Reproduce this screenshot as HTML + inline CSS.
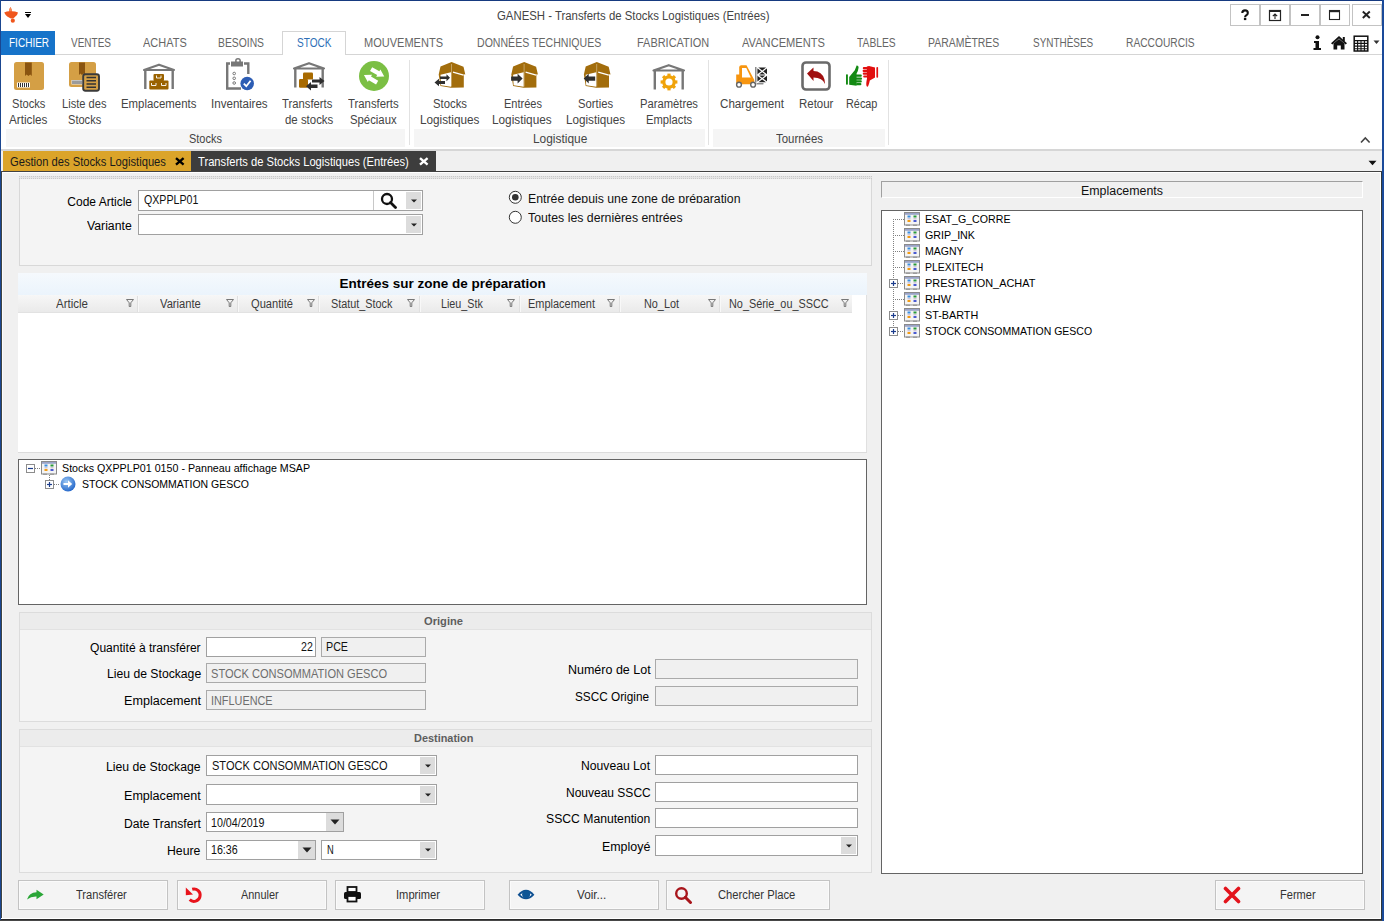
<!DOCTYPE html>
<html><head><meta charset="utf-8"><title>GANESH - Transferts de Stocks Logistiques (Entrées)</title>
<style>
html,body{margin:0;padding:0}
body{width:1384px;height:921px;overflow:hidden;position:relative;background:#f0f0f0;font-family:"Liberation Sans",sans-serif}
.t{position:absolute;white-space:nowrap;transform-origin:0 0}
.r{position:absolute;box-sizing:border-box}
</style></head><body>
<div class="r" style="left:0px;top:0px;width:1384px;height:31px;background:#ffffff;"></div>
<svg class="r" style="left:3px;top:6px" width="17" height="17" viewBox="0 0 17 17"><path d="M7.4 0.9 Q8.7 2.6 9 5.2 Q12.2 5.2 15 6.4 Q14.6 8.6 12.6 10.2 L10.6 12.2 Q9 12.8 7.4 12.2 L4.2 10.6 Q2.1 8.6 1.2 6.6 Q4 5.2 6 5.2 Q6.3 2.6 7.4 0.9 Z" fill="#f0561c"/><path d="M7.4 0.9 Q8.7 2.6 9 5.2 L6 5.2 Q6.3 2.6 7.4 0.9 Z" fill="#f58a5a"/><circle cx="9.8" cy="14.7" r="2.1" fill="#f0561c"/></svg>
<div class="r" style="left:25px;top:12px;width:6px;height:1px;background:#000;"></div>
<svg class="r" style="left:24px;top:14px" width="8" height="5" viewBox="0 0 8 5"><path d="M1 0 L7 0 L4 4 Z" fill="#000"/></svg>
<div class="t" style="left:497.30px;top:9.82px;font-size:12.50px;line-height:12.50px;color:#444;transform:scaleX(0.9100);">GANESH - Transferts de Stocks Logistiques (Entrées)</div>
<div class="r" style="left:1230px;top:4px;width:30px;height:22px;box-sizing:border-box;border:1px solid #c3c3c3;"></div>
<div class="r" style="left:1260px;top:4px;width:30px;height:22px;box-sizing:border-box;border:1px solid #c3c3c3;"></div>
<div class="r" style="left:1290px;top:4px;width:30px;height:22px;box-sizing:border-box;border:1px solid #c3c3c3;"></div>
<div class="r" style="left:1320px;top:4px;width:30px;height:22px;box-sizing:border-box;border:1px solid #c3c3c3;"></div>
<div class="r" style="left:1352px;top:4px;width:30px;height:22px;box-sizing:border-box;border:1px solid #c3c3c3;"></div>
<svg class="r" style="left:1240px;top:9px" width="10" height="12" viewBox="0 0 10 12"><path d="M2.3 4.1 Q2.3 1.4 5 1.4 Q7.8 1.4 7.8 3.9 Q7.8 5.5 6.1 6.4 Q5.1 7 5.1 8.3" stroke="#111" stroke-width="2.1" fill="none"/><rect x="3.9" y="8.9" width="2.4" height="2.2" fill="#111"/></svg>
<svg class="r" style="left:1268px;top:9px" width="14" height="13" viewBox="0 0 14 13"><rect x="1.5" y="1.5" width="11" height="10" fill="none" stroke="#222" stroke-width="1.2"/><rect x="1" y="1" width="12" height="2" fill="#222"/><path d="M7 10 V5 M4.8 7.2 L7 5 L9.2 7.2" stroke="#222" stroke-width="1.1" fill="none"/></svg>
<div class="r" style="left:1301px;top:14px;width:8px;height:2px;background:#222;"></div>
<svg class="r" style="left:1328px;top:9px" width="14" height="13" viewBox="0 0 14 13"><rect x="1.5" y="1.5" width="10" height="9" fill="none" stroke="#222" stroke-width="1.1"/><rect x="1" y="1" width="11" height="2.2" fill="#222"/></svg>
<svg class="r" style="left:1361px;top:10px" width="11" height="10" viewBox="0 0 11 10"><path d="M1.8 1.5 L8.8 8 M8.8 1.5 L1.8 8" stroke="#222" stroke-width="1.9"/></svg>
<div class="r" style="left:0px;top:31px;width:1384px;height:24px;background:#ffffff;"></div>
<div class="r" style="left:0px;top:54px;width:1384px;height:1px;background:#d5d5d5;"></div>
<div class="r" style="left:1px;top:31px;width:54px;height:24px;background:#1673c9;"></div>
<div class="t" style="left:8.80px;top:37.02px;font-size:12.50px;line-height:12.50px;color:#ffffff;transform:scaleX(0.8020);">FICHIER</div>
<div class="r" style="left:282px;top:31px;width:64px;height:24px;background:#ffffff;box-sizing:border-box;border:1px solid #d5d5d5;border-bottom:none;"></div>
<div class="t" style="left:71.30px;top:37.02px;font-size:12.50px;line-height:12.50px;color:#666666;transform:scaleX(0.8000);">VENTES</div>
<div class="t" style="left:143.30px;top:37.02px;font-size:12.50px;line-height:12.50px;color:#666666;transform:scaleX(0.8784);">ACHATS</div>
<div class="t" style="left:218.00px;top:37.02px;font-size:12.50px;line-height:12.50px;color:#666666;transform:scaleX(0.8279);">BESOINS</div>
<div class="t" style="left:296.50px;top:37.02px;font-size:12.50px;line-height:12.50px;color:#2e6fb7;transform:scaleX(0.8058);">STOCK</div>
<div class="t" style="left:364.00px;top:37.02px;font-size:12.50px;line-height:12.50px;color:#666666;transform:scaleX(0.8821);">MOUVEMENTS</div>
<div class="t" style="left:477.40px;top:37.02px;font-size:12.50px;line-height:12.50px;color:#666666;transform:scaleX(0.8456);">DONNÉES TECHNIQUES</div>
<div class="t" style="left:637.30px;top:37.02px;font-size:12.50px;line-height:12.50px;color:#666666;transform:scaleX(0.8758);">FABRICATION</div>
<div class="t" style="left:742.00px;top:37.02px;font-size:12.50px;line-height:12.50px;color:#666666;transform:scaleX(0.8895);">AVANCEMENTS</div>
<div class="t" style="left:857.40px;top:37.02px;font-size:12.50px;line-height:12.50px;color:#666666;transform:scaleX(0.8234);">TABLES</div>
<div class="t" style="left:927.70px;top:37.02px;font-size:12.50px;line-height:12.50px;color:#666666;transform:scaleX(0.8370);">PARAMÈTRES</div>
<div class="t" style="left:1032.50px;top:37.02px;font-size:12.50px;line-height:12.50px;color:#666666;transform:scaleX(0.7954);">SYNTHÈSES</div>
<div class="t" style="left:1125.60px;top:37.02px;font-size:12.50px;line-height:12.50px;color:#666666;transform:scaleX(0.8172);">RACCOURCIS</div>
<svg class="r" style="left:1312px;top:35px" width="10" height="16" viewBox="0 0 10 16"><circle cx="5.5" cy="2.3" r="2" fill="#111"/><path d="M2 6 H7 V13 H9 V15 H1.5 V13 H3.5 V8 H2 Z" fill="#111"/></svg>
<svg class="r" style="left:1330px;top:35px" width="18" height="15" viewBox="0 0 18 15"><path d="M9 1 L17 8.2 L15.6 9.4 L9 3.6 L2.4 9.4 L1 8.2 Z" fill="#111"/><path d="M3.5 8.5 L9 4 L14.5 8.5 V14.5 H10.8 V10.5 H7.2 V14.5 H3.5 Z" fill="#111"/><rect x="12.8" y="2" width="2" height="4" fill="#111"/></svg>
<svg class="r" style="left:1353px;top:35px" width="16" height="17" viewBox="0 0 16 17"><rect x="1.2" y="1.2" width="13.6" height="14.8" fill="none" stroke="#111" stroke-width="1.5"/><path d="M1 5.6 H15 M1 8.4 H15 M1 11.1 H15 M1 13.8 H15 M4.6 5.6 V16 M8 5.6 V16 M11.4 5.6 V16" stroke="#111" stroke-width="1.1"/></svg>
<svg class="r" style="left:1373px;top:40px" width="7" height="5" viewBox="0 0 7 5"><path d="M0.5 0.5 H6.5 L3.5 4 Z" fill="#333"/></svg>
<div class="r" style="left:0px;top:55px;width:1384px;height:95px;background:#ffffff;"></div>
<div class="r" style="left:0px;top:149px;width:1384px;height:2px;background:#d6d6d6;"></div>
<div class="r" style="left:6px;top:129px;width:399px;height:18px;background:#f5f5f5;"></div>
<div class="r" style="left:414px;top:129px;width:291px;height:18px;background:#f5f5f5;"></div>
<div class="r" style="left:713px;top:129px;width:172px;height:18px;background:#f5f5f5;"></div>
<div class="r" style="left:409px;top:60px;width:1px;height:85px;background:#e2e2e2;"></div>
<div class="r" style="left:708px;top:60px;width:1px;height:85px;background:#e2e2e2;"></div>
<div class="r" style="left:888px;top:60px;width:1px;height:85px;background:#e2e2e2;"></div>
<div class="t" style="left:188.60px;top:132.62px;font-size:12.50px;line-height:12.50px;color:#444;transform:scaleX(0.8773);">Stocks</div>
<div class="t" style="left:532.70px;top:132.62px;font-size:12.50px;line-height:12.50px;color:#444;transform:scaleX(0.9526);">Logistique</div>
<div class="t" style="left:775.80px;top:132.62px;font-size:12.50px;line-height:12.50px;color:#444;transform:scaleX(0.9137);">Tournées</div>
<div class="t" style="left:12.40px;top:97.54px;font-size:12.00px;line-height:12.00px;color:#444;transform:scaleX(0.9278);">Stocks</div>
<div class="t" style="left:9.40px;top:113.54px;font-size:12.00px;line-height:12.00px;color:#444;transform:scaleX(0.9756);">Articles</div>
<div class="t" style="left:61.50px;top:97.54px;font-size:12.00px;line-height:12.00px;color:#444;transform:scaleX(0.9259);">Liste des</div>
<div class="t" style="left:67.80px;top:113.54px;font-size:12.00px;line-height:12.00px;color:#444;transform:scaleX(0.9222);">Stocks</div>
<div class="t" style="left:121.40px;top:97.54px;font-size:12.00px;line-height:12.00px;color:#444;transform:scaleX(0.9499);">Emplacements</div>
<div class="t" style="left:211.40px;top:97.54px;font-size:12.00px;line-height:12.00px;color:#444;transform:scaleX(0.9646);">Inventaires</div>
<div class="t" style="left:282.40px;top:97.54px;font-size:12.00px;line-height:12.00px;color:#444;transform:scaleX(0.9388);">Transferts</div>
<div class="t" style="left:284.70px;top:113.54px;font-size:12.00px;line-height:12.00px;color:#444;transform:scaleX(0.9527);">de stocks</div>
<div class="t" style="left:348.00px;top:97.54px;font-size:12.00px;line-height:12.00px;color:#444;transform:scaleX(0.9462);">Transferts</div>
<div class="t" style="left:350.40px;top:113.54px;font-size:12.00px;line-height:12.00px;color:#444;transform:scaleX(0.9437);">Spéciaux</div>
<div class="t" style="left:433.00px;top:97.54px;font-size:12.00px;line-height:12.00px;color:#444;transform:scaleX(0.9444);">Stocks</div>
<div class="t" style="left:419.60px;top:113.54px;font-size:12.00px;line-height:12.00px;color:#444;transform:scaleX(0.9783);">Logistiques</div>
<div class="t" style="left:504.00px;top:97.54px;font-size:12.00px;line-height:12.00px;color:#444;transform:scaleX(0.9192);">Entrées</div>
<div class="t" style="left:492.00px;top:113.54px;font-size:12.00px;line-height:12.00px;color:#444;transform:scaleX(0.9832);">Logistiques</div>
<div class="t" style="left:578.00px;top:97.54px;font-size:12.00px;line-height:12.00px;color:#444;transform:scaleX(0.9378);">Sorties</div>
<div class="t" style="left:565.80px;top:113.54px;font-size:12.00px;line-height:12.00px;color:#444;transform:scaleX(0.9750);">Logistiques</div>
<div class="t" style="left:640.00px;top:97.54px;font-size:12.00px;line-height:12.00px;color:#444;transform:scaleX(0.9349);">Paramètres</div>
<div class="t" style="left:645.80px;top:113.54px;font-size:12.00px;line-height:12.00px;color:#444;transform:scaleX(0.9367);">Emplacts</div>
<div class="t" style="left:720.00px;top:97.54px;font-size:12.00px;line-height:12.00px;color:#444;transform:scaleX(0.9688);">Chargement</div>
<div class="t" style="left:798.60px;top:97.54px;font-size:12.00px;line-height:12.00px;color:#444;transform:scaleX(0.9556);">Retour</div>
<div class="t" style="left:846.30px;top:97.54px;font-size:12.00px;line-height:12.00px;color:#444;transform:scaleX(0.9054);">Récap</div>
<svg class="r" style="left:1360px;top:136px" width="11" height="8" viewBox="0 0 11 8"><path d="M1 6.5 L5.3 2 L9.6 6.5" fill="none" stroke="#444" stroke-width="1.6"/></svg>
<svg class="r" style="left:0;top:0" width="1384" height="150" viewBox="0 0 1384 150"><rect x="14" y="62" width="30" height="28" rx="2.5" fill="#d49f45"/><path d="M25 62.5 H31.8 V76 L30.2 74.5 L28.4 76 L26.6 74.5 L25 76 Z" fill="#8a5410"/><rect x="17" y="82.5" width="13" height="5" fill="#fff"/><path d="M18.5 83 V87 M20.5 83 V87 M22.5 83 V87 M24.5 83 V87 M26.5 83 V87 M28.5 83 V87" stroke="#333" stroke-width="1"/><rect x="69" y="62" width="27" height="25" rx="2.5" fill="#d49f45"/><path d="M79 62.5 H85 V75 L83.5 73.5 L82 75 L80.5 73.5 L79 75 Z" fill="#8a5410"/><rect x="71.5" y="80" width="12" height="4.5" fill="#eee"/><path d="M73 80.5 V84 M75 80.5 V84 M77 80.5 V84 M79 80.5 V84 M81 80.5 V84" stroke="#333" stroke-width="0.9"/><rect x="83.2" y="74.2" width="15.8" height="16.6" rx="2.2" fill="#d49f45" stroke="#3a3a3a" stroke-width="1.9"/><path d="M86.5 77.5 H96 M86.5 80.8 H96 M86.5 84 H96 M86.5 87.2 H96" stroke="#333" stroke-width="1.5"/><path d="M144 70 L159 64.7 L174 70 L144 70 Z" fill="none" stroke="#777" stroke-width="2.2" stroke-linejoin="round"/><path d="M145.3 70 V89 M172.7 70 V89" stroke="#777" stroke-width="2.4"/><rect x="153.5" y="74" width="10.5" height="7" rx="1" fill="#9a6200"/><rect x="149.3" y="80.6" width="19.2" height="8.8" rx="1" fill="#9a6200"/><path d="M156.5 75.5 V78 H161 V75.5 M151.5 83 V85.5 H156 V83 M161.5 83 V85.5 H166 V83" stroke="#fff" stroke-width="0.9" fill="none"/><path d="M230 63.5 H227.2 V88.5 H241" fill="none" stroke="#777" stroke-width="2.4"/><path d="M244 63.5 H248.3 V74" fill="none" stroke="#777" stroke-width="2.4"/><rect x="231" y="61.5" width="12" height="5" fill="#777"/><circle cx="238" cy="61" r="2.2" fill="none" stroke="#777" stroke-width="1.5"/><circle cx="234.2" cy="73.5" r="1.3" fill="none" stroke="#777" stroke-width="1"/><circle cx="234.2" cy="78.3" r="1.3" fill="none" stroke="#777" stroke-width="1"/><circle cx="234.2" cy="83" r="1.3" fill="none" stroke="#777" stroke-width="1"/><circle cx="247.2" cy="83.5" r="6.8" fill="#2d5db4"/><path d="M243.8 83.6 L246.3 86.2 L250.6 80.8" stroke="#fff" stroke-width="1.8" fill="none"/><path d="M294 68.5 L309 63.2 L324 68.5 L294 68.5 Z" fill="none" stroke="#777" stroke-width="2.2" stroke-linejoin="round"/><path d="M295.3 68.5 V87.5 M322.7 68.5 V87.5" stroke="#777" stroke-width="2.4"/><rect x="303" y="72.5" width="10" height="7" rx="1.2" fill="#a86a00"/><rect x="299" y="79" width="9" height="8.8" rx="1.2" fill="#a86a00"/><path d="M312 79.5 H319.5 V77 L324.5 81 L319.5 85 V82.5 H312 Z" fill="#2f2f2f"/><path d="M317.5 84.5 H311 V82 L306 86.2 L311 90.5 V88 H317.5 Z" fill="#2f2f2f"/><circle cx="374" cy="76" r="15" fill="#7bbf44"/><g transform="translate(374.1,75.8) rotate(30)"><path d="M-6 -6.5 H2.3 V-8.6 L9.2 -4.4 L2.3 -0.2 V-2.2 H-6 Z" fill="#fff"/><path d="M6 6.5 H-2.3 V8.6 L-9.2 4.4 L-2.3 0.2 V2.2 H6 Z" fill="#fff"/></g><g transform="translate(0,0)"><path d="M438.7 74.5 L440.5 66.5 L451.6 62 L463.5 66.8 L465.3 74.6 L463.8 74.3 L463.8 87.5 L451 87.8 L440.5 86 Z" fill="#a26d0c"/><path d="M440.5 74.8 L451 72.2 L451 86.8 L441 85.2 Z" fill="#ffffff"/><path d="M451.5 64 V86.5" stroke="#fff" stroke-width="0.6" opacity="0.6"/><path d="M453 72.2 L463.6 75.2" stroke="#fff" stroke-width="1.2"/><path d="M440 76.5 H446.5 V74.3 L450 77.8 L446.5 81.2 V79 H440 Z" fill="#2f2f2f"/><path d="M445 81 H439 V78.8 L434.5 82.5 L439 86.2 V84 H445 Z" fill="#2f2f2f"/></g><g transform="translate(72.6,0)"><path d="M438.7 74.5 L440.5 66.5 L451.6 62 L463.5 66.8 L465.3 74.6 L463.8 74.3 L463.8 87.5 L451 87.8 L440.5 86 Z" fill="#a26d0c"/><path d="M440.5 74.8 L451 72.2 L451 86.8 L441 85.2 Z" fill="#ffffff"/><path d="M451.5 64 V86.5" stroke="#fff" stroke-width="0.6" opacity="0.6"/><path d="M453 72.2 L463.6 75.2" stroke="#fff" stroke-width="1.2"/><path d="M438.5 76.5 H445 V73.8 L450 78.6 L445 83.4 V80.8 H438.5 Z" fill="#2f2f2f"/></g><g transform="translate(145.2,0)"><path d="M438.7 74.5 L440.5 66.5 L451.6 62 L463.5 66.8 L465.3 74.6 L463.8 74.3 L463.8 87.5 L451 87.8 L440.5 86 Z" fill="#a26d0c"/><path d="M440.5 74.8 L451 72.2 L451 86.8 L441 85.2 Z" fill="#ffffff"/><path d="M451.5 64 V86.5" stroke="#fff" stroke-width="0.6" opacity="0.6"/><path d="M453 72.2 L463.6 75.2" stroke="#fff" stroke-width="1.2"/><path d="M450 76.5 H443.5 V73.8 L438.5 78.6 L443.5 83.4 V80.8 H450 Z" fill="#2f2f2f"/></g><path d="M653.5 70.5 L668.75 65.2 L684 70.5 L653.5 70.5 Z" fill="none" stroke="#777" stroke-width="2.2" stroke-linejoin="round"/><path d="M654.8 70.5 V89.5 M682.7 70.5 V89.5" stroke="#777" stroke-width="2.4"/><g transform="translate(669,82)"><circle r="5.2" fill="none" stroke="#f0a30a" stroke-width="3.2"/><rect x="-1.6" y="-8.4" width="3.2" height="3.6" fill="#f0a30a" transform="rotate(0)"/><rect x="-1.6" y="-8.4" width="3.2" height="3.6" fill="#f0a30a" transform="rotate(45)"/><rect x="-1.6" y="-8.4" width="3.2" height="3.6" fill="#f0a30a" transform="rotate(90)"/><rect x="-1.6" y="-8.4" width="3.2" height="3.6" fill="#f0a30a" transform="rotate(135)"/><rect x="-1.6" y="-8.4" width="3.2" height="3.6" fill="#f0a30a" transform="rotate(180)"/><rect x="-1.6" y="-8.4" width="3.2" height="3.6" fill="#f0a30a" transform="rotate(225)"/><rect x="-1.6" y="-8.4" width="3.2" height="3.6" fill="#f0a30a" transform="rotate(270)"/><rect x="-1.6" y="-8.4" width="3.2" height="3.6" fill="#f0a30a" transform="rotate(315)"/></g><path d="M736.2 74.6 H739.2 V67 Q739.5 65.2 741.2 65.2 H746.5 L754.3 80 V84.3 H736.2 Z" fill="#f7950f"/><path d="M742 68 H746.3 L750.8 77.4 H742 Z" fill="#fff"/><circle cx="739" cy="84.7" r="2.4" fill="#fff" stroke="#666" stroke-width="1.4"/><circle cx="753.1" cy="84.7" r="2.4" fill="#fff" stroke="#666" stroke-width="1.4"/><path d="M755.8 67 V82.6" stroke="#777" stroke-width="1.3"/><path d="M756.5 83.8 H763.5" stroke="#666" stroke-width="1.1"/><rect x="757.4" y="67.6" width="9.6" height="14.6" rx="1.5" fill="#222"/><path d="M757.4 67.6 L767 75 M767 67.6 L757.4 75 M757.4 75 L767 82.2 M767 75 L757.4 82.2 M758 75 H766.4" stroke="#fff" stroke-width="1.2"/><rect x="802.5" y="62.5" width="27" height="27" rx="3.5" fill="#fff" stroke="#6a6a6a" stroke-width="2.6"/><path d="M807 73.5 L813.5 67.5 V71 Q822 71 824.5 79.5 L825 84 Q822.5 77.5 813.5 77.5 V81 Z" fill="#a01010"/><rect x="846" y="74.2" width="1.9" height="10.6" rx="0.8" fill="#138a13"/><path d="M849.2 77 L854.8 70.2 Q856 67 856.6 65.4 Q858.6 65.2 858.6 67.5 Q858.3 70.5 856.6 73.6 L856.6 85.8 L849.2 84.8 Z" fill="#138a13"/><rect x="855.6" y="74.5" width="6.2" height="2.3" rx="1" fill="#138a13"/><rect x="855.6" y="77.4" width="6.4" height="2.3" rx="1" fill="#138a13"/><rect x="855.6" y="80.3" width="6.2" height="2.3" rx="1" fill="#138a13"/><rect x="856" y="83.1" width="5.4" height="2.2" rx="1" fill="#138a13"/><rect x="876.4" y="67" width="1.7" height="10.7" rx="0.8" fill="#e20f0f"/><path d="M875 67.5 L875 77.6 L869.8 80.5 Q868.8 85.5 867.6 86.8 Q866 86.6 866.3 83 Q866.6 80.5 867 78.5 L866.8 66.5 L869 65.9 Z" fill="#e20f0f"/><rect x="862.8" y="67" width="5.5" height="2.2" rx="1" fill="#e20f0f"/><rect x="862.6" y="69.8" width="5.8" height="2.2" rx="1" fill="#e20f0f"/><rect x="862.8" y="72.6" width="5.6" height="2.2" rx="1" fill="#e20f0f"/><rect x="863.2" y="75.4" width="5" height="2.2" rx="1" fill="#e20f0f"/></svg>
<div class="r" style="left:0px;top:151px;width:1384px;height:20px;background:#f0f0f0;"></div>
<div class="r" style="left:3px;top:151px;width:188px;height:20px;background:#dba42a;"></div>
<div class="t" style="left:9.50px;top:155.84px;font-size:12.00px;line-height:12.00px;color:#1a1a1a;transform:scaleX(0.9313);">Gestion des Stocks Logistiques</div>
<svg class="r" style="left:175px;top:157px" width="10" height="9" viewBox="0 0 10 9"><path d="M1 1.2 L8.6 7.6 M8.6 1.2 L1 7.6" stroke="#000" stroke-width="2.4"/></svg>
<div class="r" style="left:191px;top:151px;width:245px;height:20px;background:#3d3d3d;"></div>
<div class="t" style="left:197.80px;top:155.84px;font-size:12.00px;line-height:12.00px;color:#ffffff;transform:scaleX(0.9314);">Transferts de Stocks Logistiques (Entrées)</div>
<svg class="r" style="left:419px;top:157px" width="10" height="9" viewBox="0 0 10 9"><path d="M1 1.2 L8.6 7.6 M8.6 1.2 L1 7.6" stroke="#fff" stroke-width="2.4"/></svg>
<svg class="r" style="left:1368px;top:160px" width="9" height="6" viewBox="0 0 9 6"><path d="M0.5 0.8 H8.5 L4.5 5.2 Z" fill="#111"/></svg>
<div class="r" style="left:0px;top:171px;width:1384px;height:1px;background:#424242;"></div>
<div class="r" style="left:2px;top:172px;width:1379px;height:1px;background:#ffffff;"></div>
<div class="r" style="left:19px;top:176px;width:853px;height:90px;background:#f4f4f4;box-sizing:border-box;border:1px solid #d8d8d8;"></div>
<svg class="r" style="left:19px;top:176px" width="853" height="3" viewBox="0 0 853 3"><rect width="853" height="3" fill="#e6e6e6"/><path d="M0 0.5 H853 M0 2.5 H853" stroke="#c9c9c9" stroke-width="1" stroke-dasharray="1 1"/></svg>
<div class="t" style="left:67.30px;top:195.74px;font-size:12.00px;line-height:12.00px;color:#000000;">Code Article</div>
<div class="t" style="left:87.00px;top:219.84px;font-size:12.00px;line-height:12.00px;color:#000000;transform:scaleX(1.0205);">Variante</div>
<div class="r" style="left:138px;top:190px;width:285px;height:21px;background:#ffffff;box-sizing:border-box;border:1px solid #a0a0a0;"></div>
<div class="r" style="left:373px;top:191px;width:1px;height:19px;background:#c8c8c8;"></div>
<svg class="r" style="left:380px;top:192px" width="18" height="17" viewBox="0 0 18 17"><circle cx="7" cy="7" r="5" fill="none" stroke="#111" stroke-width="2.3"/><path d="M10.5 10.5 L15.5 15.5" stroke="#111" stroke-width="2.8" stroke-linecap="round"/></svg>
<div class="r" style="left:406px;top:192px;width:15px;height:17px;background:#dcdcdc;"></div>
<svg class="r" style="left:410.5px;top:198.5px" width="6" height="4" viewBox="0 0 6 4"><path d="M0 0.5 H6 L3 3.5 Z" fill="#222"/></svg>
<div class="t" style="left:144.00px;top:194.34px;font-size:12.00px;line-height:12.00px;color:#111;transform:scaleX(0.8847);">QXPPLP01</div>
<div class="r" style="left:138px;top:214px;width:285px;height:21px;background:#ffffff;box-sizing:border-box;border:1px solid #a0a0a0;"></div>
<div class="r" style="left:406px;top:216px;width:15px;height:17px;background:#dcdcdc;"></div>
<svg class="r" style="left:410.5px;top:222.5px" width="6" height="4" viewBox="0 0 6 4"><path d="M0 0.5 H6 L3 3.5 Z" fill="#222"/></svg>
<svg class="r" style="left:508px;top:190px" width="14" height="14" viewBox="0 0 14 14"><circle cx="7.3" cy="7.3" r="6" fill="#fff" stroke="#333" stroke-width="1"/><circle cx="7.3" cy="7.3" r="3.3" fill="#333"/></svg>
<svg class="r" style="left:508px;top:210px" width="14" height="14" viewBox="0 0 14 14"><circle cx="7.3" cy="7.3" r="6" fill="#fff" stroke="#333" stroke-width="1"/></svg>
<div class="r" style="left:520px;top:185px;width:260px;height:18px;overflow:hidden">
<div class="t" style="left:8.00px;top:7.54px;font-size:12.00px;line-height:12.00px;color:#111;transform:scaleX(1.0242);">Entrée depuis une zone de préparation</div>
</div>
<div class="t" style="left:528.00px;top:212.34px;font-size:12.00px;line-height:12.00px;color:#111;transform:scaleX(1.0253);">Toutes les dernières entrées</div>
<div class="r" style="left:18px;top:273px;width:849px;height:22px;background:linear-gradient(#f5f9fd,#ebf4fc);"></div>
<div class="t" style="left:339.50px;top:276.77px;font-size:13.50px;line-height:13.50px;color:#000;font-weight:bold;">Entrées sur zone de préparation</div>
<div class="r" style="left:18px;top:295px;width:849px;height:158px;background:#ffffff;"></div>
<div class="r" style="left:18px;top:295px;width:834px;height:18px;background:linear-gradient(#f7f7f7,#e9e9e9);"></div>
<div class="r" style="left:18px;top:312px;width:834px;height:1px;background:#e2e2e2;"></div>
<div class="r" style="left:866px;top:295px;width:1px;height:158px;background:#e0e0e0;"></div>
<div class="r" style="left:18px;top:452px;width:849px;height:1px;background:#dcdcdc;"></div>
<div class="t" style="left:56.00px;top:297.74px;font-size:12.00px;line-height:12.00px;color:#3a3a3a;transform:scaleX(0.9592);">Article</div>
<svg class="r" style="left:125.5px;top:299px" width="8" height="8" viewBox="0 0 8 8"><path d="M0.5 0.5 H7.5 L4.8 3.8 V7.5 H3.2 V3.8 Z" fill="none" stroke="#777" stroke-width="1"/></svg>
<div class="r" style="left:137px;top:296px;width:1px;height:16px;background:#e0e0e0;"></div>
<div class="r" style="left:138px;top:296px;width:1px;height:16px;background:#f8f8f8;"></div>
<div class="t" style="left:160.00px;top:297.74px;font-size:12.00px;line-height:12.00px;color:#3a3a3a;transform:scaleX(0.9315);">Variante</div>
<svg class="r" style="left:225.5px;top:299px" width="8" height="8" viewBox="0 0 8 8"><path d="M0.5 0.5 H7.5 L4.8 3.8 V7.5 H3.2 V3.8 Z" fill="none" stroke="#777" stroke-width="1"/></svg>
<div class="r" style="left:237px;top:296px;width:1px;height:16px;background:#e0e0e0;"></div>
<div class="r" style="left:238px;top:296px;width:1px;height:16px;background:#f8f8f8;"></div>
<div class="t" style="left:251.00px;top:297.74px;font-size:12.00px;line-height:12.00px;color:#3a3a3a;transform:scaleX(0.9259);">Quantité</div>
<svg class="r" style="left:306.5px;top:299px" width="8" height="8" viewBox="0 0 8 8"><path d="M0.5 0.5 H7.5 L4.8 3.8 V7.5 H3.2 V3.8 Z" fill="none" stroke="#777" stroke-width="1"/></svg>
<div class="r" style="left:318px;top:296px;width:1px;height:16px;background:#e0e0e0;"></div>
<div class="r" style="left:319px;top:296px;width:1px;height:16px;background:#f8f8f8;"></div>
<div class="t" style="left:331.00px;top:297.74px;font-size:12.00px;line-height:12.00px;color:#3a3a3a;transform:scaleX(0.9031);">Statut_Stock</div>
<svg class="r" style="left:407.1px;top:299px" width="8" height="8" viewBox="0 0 8 8"><path d="M0.5 0.5 H7.5 L4.8 3.8 V7.5 H3.2 V3.8 Z" fill="none" stroke="#777" stroke-width="1"/></svg>
<div class="r" style="left:419px;top:296px;width:1px;height:16px;background:#e0e0e0;"></div>
<div class="r" style="left:420px;top:296px;width:1px;height:16px;background:#f8f8f8;"></div>
<div class="t" style="left:440.50px;top:297.74px;font-size:12.00px;line-height:12.00px;color:#3a3a3a;transform:scaleX(0.8943);">Lieu_Stk</div>
<svg class="r" style="left:507.2px;top:299px" width="8" height="8" viewBox="0 0 8 8"><path d="M0.5 0.5 H7.5 L4.8 3.8 V7.5 H3.2 V3.8 Z" fill="none" stroke="#777" stroke-width="1"/></svg>
<div class="r" style="left:519px;top:296px;width:1px;height:16px;background:#e0e0e0;"></div>
<div class="r" style="left:520px;top:296px;width:1px;height:16px;background:#f8f8f8;"></div>
<div class="t" style="left:528.00px;top:297.74px;font-size:12.00px;line-height:12.00px;color:#3a3a3a;transform:scaleX(0.9131);">Emplacement</div>
<svg class="r" style="left:607.3px;top:299px" width="8" height="8" viewBox="0 0 8 8"><path d="M0.5 0.5 H7.5 L4.8 3.8 V7.5 H3.2 V3.8 Z" fill="none" stroke="#777" stroke-width="1"/></svg>
<div class="r" style="left:619px;top:296px;width:1px;height:16px;background:#e0e0e0;"></div>
<div class="r" style="left:620px;top:296px;width:1px;height:16px;background:#f8f8f8;"></div>
<div class="t" style="left:644.30px;top:297.74px;font-size:12.00px;line-height:12.00px;color:#3a3a3a;transform:scaleX(0.9044);">No_Lot</div>
<svg class="r" style="left:707.5px;top:299px" width="8" height="8" viewBox="0 0 8 8"><path d="M0.5 0.5 H7.5 L4.8 3.8 V7.5 H3.2 V3.8 Z" fill="none" stroke="#777" stroke-width="1"/></svg>
<div class="r" style="left:719px;top:296px;width:1px;height:16px;background:#e0e0e0;"></div>
<div class="r" style="left:720px;top:296px;width:1px;height:16px;background:#f8f8f8;"></div>
<div class="t" style="left:729.00px;top:297.74px;font-size:12.00px;line-height:12.00px;color:#3a3a3a;transform:scaleX(0.9060);">No_Série_ou_SSCC</div>
<svg class="r" style="left:840.5px;top:299px" width="8" height="8" viewBox="0 0 8 8"><path d="M0.5 0.5 H7.5 L4.8 3.8 V7.5 H3.2 V3.8 Z" fill="none" stroke="#777" stroke-width="1"/></svg>
<div class="r" style="left:18px;top:459px;width:849px;height:146px;background:#ffffff;box-sizing:border-box;border:1px solid #646464;"></div>
<svg class="r" style="left:26px;top:464px" width="9" height="9" viewBox="0 0 9 9"><rect x="0.5" y="0.5" width="8" height="8" fill="#fff" stroke="#8c8c8c" stroke-width="1"/><path d="M2 4.5 H7" stroke="#1c3c8c" stroke-width="1.2"/></svg>
<svg class="r" style="left:35px;top:468px" width="6" height="1" viewBox="0 0 6 1"><path d="M0 0.5 H6" stroke="#808080" stroke-width="1" stroke-dasharray="1 1"/></svg>
<svg class="r" style="left:41px;top:461px" width="16" height="14" viewBox="0 0 16 14"><rect x="0.5" y="0.5" width="15" height="12.5" fill="#f4f4f4" stroke="#8a8a8a" stroke-width="1"/><rect x="1" y="1" width="14" height="1.8" fill="#9aa3c8"/><rect x="3.5" y="3.5" width="3" height="2" fill="#3a8ee0"/><rect x="9.5" y="3.5" width="3" height="2" fill="#2a9a3a"/><path d="M3.5 6.8 H6.5 M9.5 6.8 H12.5" stroke="#b0a0c0" stroke-width="0.8"/><rect x="3.5" y="8" width="3" height="2" fill="#f39c12"/><rect x="9.5" y="8" width="3" height="2" fill="#4a5ad0"/><path d="M2 13.2 H6 M9 13.2 H13" stroke="#8a8a8a" stroke-width="1"/></svg>
<div class="t" style="left:62.40px;top:462.66px;font-size:11.50px;line-height:11.50px;color:#000;transform:scaleX(0.9291);">Stocks QXPPLP01 0150 - Panneau affichage MSAP</div>
<svg class="r" style="left:49px;top:475px" width="1" height="5" viewBox="0 0 1 5"><path d="M0.5 0 V5" stroke="#808080" stroke-width="1" stroke-dasharray="1 1"/></svg>
<svg class="r" style="left:45px;top:480px" width="9" height="9" viewBox="0 0 9 9"><rect x="0.5" y="0.5" width="8" height="8" fill="#fff" stroke="#8c8c8c" stroke-width="1"/><path d="M2 4.5 H7" stroke="#1c3c8c" stroke-width="1.2"/><path d="M4.5 2 V7" stroke="#1c3c8c" stroke-width="1.2"/></svg>
<svg class="r" style="left:54px;top:484px" width="6" height="1" viewBox="0 0 6 1"><path d="M0 0.5 H6" stroke="#808080" stroke-width="1" stroke-dasharray="1 1"/></svg>
<svg class="r" style="left:60px;top:476px" width="16" height="16" viewBox="0 0 16 16"><defs><radialGradient id="bg1" cx="0.4" cy="0.35" r="0.7"><stop offset="0" stop-color="#9cc8f4"/><stop offset="1" stop-color="#1f63c8"/></radialGradient></defs><circle cx="8" cy="8" r="7.5" fill="url(#bg1)"/><path d="M3.5 7 H8 V4.3 L12.2 8 L8 11.7 V9 H3.5 Z" fill="#fff"/></svg>
<div class="t" style="left:81.50px;top:478.86px;font-size:11.50px;line-height:11.50px;color:#000;transform:scaleX(0.9127);">STOCK CONSOMMATION GESCO</div>
<div class="r" style="left:19px;top:612px;width:853px;height:110px;background:#f4f4f4;box-sizing:border-box;border:1px solid #dcdcdc;"></div>
<div class="r" style="left:20px;top:613px;width:851px;height:16px;background:#ececec;"></div>
<div class="r" style="left:20px;top:629px;width:851px;height:1px;background:#e2e2e2;"></div>
<div class="t" style="left:424.00px;top:615.86px;font-size:11.50px;line-height:11.50px;color:#5e5e5e;font-weight:bold;transform:scaleX(0.9689);">Origine</div>
<div class="t" style="left:90.40px;top:641.84px;font-size:12.00px;line-height:12.00px;color:#000000;transform:scaleX(1.0051);">Quantité à transférer</div>
<div class="t" style="left:106.80px;top:668.44px;font-size:12.00px;line-height:12.00px;color:#000000;transform:scaleX(1.0155);">Lieu de Stockage</div>
<div class="t" style="left:124.00px;top:695.04px;font-size:12.00px;line-height:12.00px;color:#000000;transform:scaleX(1.0493);">Emplacement</div>
<div class="r" style="left:206px;top:637px;width:110px;height:20px;background:#ffffff;box-sizing:border-box;border:1px solid #a0a0a0;"></div>
<div class="t" style="left:301.00px;top:641.34px;font-size:12.00px;line-height:12.00px;color:#111;transform:scaleX(0.8859);">22</div>
<div class="r" style="left:321px;top:637px;width:105px;height:20px;background:#f0f0f0;box-sizing:border-box;border:1px solid #aaaaaa;"></div>
<div class="t" style="left:326.00px;top:641.34px;font-size:12.00px;line-height:12.00px;color:#111;transform:scaleX(0.8921);">PCE</div>
<div class="r" style="left:206px;top:663px;width:220px;height:20px;background:#f0f0f0;box-sizing:border-box;border:1px solid #aaaaaa;"></div>
<div class="t" style="left:211.40px;top:667.54px;font-size:12.00px;line-height:12.00px;color:#6d6d6d;transform:scaleX(0.9224);">STOCK CONSOMMATION GESCO</div>
<div class="r" style="left:206px;top:690px;width:220px;height:20px;background:#f0f0f0;box-sizing:border-box;border:1px solid #aaaaaa;"></div>
<div class="t" style="left:211.40px;top:694.54px;font-size:12.00px;line-height:12.00px;color:#6d6d6d;transform:scaleX(0.9053);">INFLUENCE</div>
<div class="t" style="left:568.00px;top:664.04px;font-size:12.00px;line-height:12.00px;color:#000000;transform:scaleX(1.0406);">Numéro de Lot</div>
<div class="t" style="left:575.00px;top:691.04px;font-size:12.00px;line-height:12.00px;color:#000000;transform:scaleX(0.9820);">SSCC Origine</div>
<div class="r" style="left:655px;top:659px;width:203px;height:20px;background:#f0f0f0;box-sizing:border-box;border:1px solid #aaaaaa;"></div>
<div class="r" style="left:655px;top:686px;width:203px;height:20px;background:#f0f0f0;box-sizing:border-box;border:1px solid #aaaaaa;"></div>
<div class="r" style="left:19px;top:729px;width:853px;height:144px;background:#f4f4f4;box-sizing:border-box;border:1px solid #dcdcdc;"></div>
<div class="r" style="left:20px;top:730px;width:851px;height:16px;background:#ececec;"></div>
<div class="r" style="left:20px;top:746px;width:851px;height:1px;background:#e2e2e2;"></div>
<div class="t" style="left:413.70px;top:732.86px;font-size:11.50px;line-height:11.50px;color:#5e5e5e;font-weight:bold;transform:scaleX(0.9486);">Destination</div>
<div class="t" style="left:106.20px;top:760.84px;font-size:12.00px;line-height:12.00px;color:#000000;transform:scaleX(1.0198);">Lieu de Stockage</div>
<div class="t" style="left:124.00px;top:789.74px;font-size:12.00px;line-height:12.00px;color:#000000;transform:scaleX(1.0466);">Emplacement</div>
<div class="t" style="left:124.00px;top:818.34px;font-size:12.00px;line-height:12.00px;color:#000000;transform:scaleX(1.0103);">Date Transfert</div>
<div class="t" style="left:167.40px;top:845.04px;font-size:12.00px;line-height:12.00px;color:#000000;transform:scaleX(1.0214);">Heure</div>
<div class="r" style="left:206px;top:755px;width:231px;height:21px;background:#ffffff;box-sizing:border-box;border:1px solid #a0a0a0;"></div>
<div class="r" style="left:420px;top:757px;width:15px;height:17px;background:#dcdcdc;"></div>
<svg class="r" style="left:424.5px;top:763.5px" width="6" height="4" viewBox="0 0 6 4"><path d="M0 0.5 H6 L3 3.5 Z" fill="#222"/></svg>
<div class="t" style="left:212.30px;top:759.54px;font-size:12.00px;line-height:12.00px;color:#111;transform:scaleX(0.9203);">STOCK CONSOMMATION GESCO</div>
<div class="r" style="left:206px;top:784px;width:231px;height:21px;background:#ffffff;box-sizing:border-box;border:1px solid #a0a0a0;"></div>
<div class="r" style="left:420px;top:786px;width:15px;height:17px;background:#dcdcdc;"></div>
<svg class="r" style="left:424.5px;top:792.5px" width="6" height="4" viewBox="0 0 6 4"><path d="M0 0.5 H6 L3 3.5 Z" fill="#222"/></svg>
<div class="r" style="left:206px;top:812px;width:138px;height:20px;background:#ffffff;box-sizing:border-box;border:1px solid #a0a0a0;"></div>
<div class="r" style="left:326px;top:813px;width:17px;height:18px;background:#dcdcdc;"></div>
<svg class="r" style="left:329.5px;top:819px" width="10" height="6" viewBox="0 0 10 6"><path d="M0.5 0.5 H9.5 L5 5.5 Z" fill="#222"/></svg>
<div class="t" style="left:210.50px;top:816.54px;font-size:12.00px;line-height:12.00px;color:#111;transform:scaleX(0.8908);">10/04/2019</div>
<div class="r" style="left:206px;top:840px;width:110px;height:20px;background:#ffffff;box-sizing:border-box;border:1px solid #a0a0a0;"></div>
<div class="r" style="left:298px;top:841px;width:17px;height:18px;background:#dcdcdc;"></div>
<svg class="r" style="left:301.5px;top:847px" width="10" height="6" viewBox="0 0 10 6"><path d="M0.5 0.5 H9.5 L5 5.5 Z" fill="#222"/></svg>
<div class="t" style="left:210.50px;top:844.04px;font-size:12.00px;line-height:12.00px;color:#111;transform:scaleX(0.8882);">16:36</div>
<div class="r" style="left:321px;top:840px;width:116px;height:20px;background:#ffffff;box-sizing:border-box;border:1px solid #a0a0a0;"></div>
<div class="r" style="left:420px;top:842px;width:15px;height:16px;background:#dcdcdc;"></div>
<svg class="r" style="left:424.5px;top:848px" width="6" height="4" viewBox="0 0 6 4"><path d="M0 0.5 H6 L3 3.5 Z" fill="#222"/></svg>
<div class="t" style="left:327.30px;top:843.54px;font-size:12.00px;line-height:12.00px;color:#111;transform:scaleX(0.7755);">N</div>
<div class="t" style="left:581.30px;top:760.34px;font-size:12.00px;line-height:12.00px;color:#000000;transform:scaleX(1.0141);">Nouveau Lot</div>
<div class="t" style="left:566.00px;top:787.04px;font-size:12.00px;line-height:12.00px;color:#000000;">Nouveau SSCC</div>
<div class="t" style="left:546.00px;top:813.04px;font-size:12.00px;line-height:12.00px;color:#000000;transform:scaleX(1.0154);">SSCC Manutention</div>
<div class="t" style="left:602.00px;top:841.04px;font-size:12.00px;line-height:12.00px;color:#000000;transform:scaleX(1.0347);">Employé</div>
<div class="r" style="left:655px;top:755px;width:203px;height:20px;background:#ffffff;box-sizing:border-box;border:1px solid #a0a0a0;"></div>
<div class="r" style="left:655px;top:782px;width:203px;height:20px;background:#ffffff;box-sizing:border-box;border:1px solid #a0a0a0;"></div>
<div class="r" style="left:655px;top:808px;width:203px;height:20px;background:#ffffff;box-sizing:border-box;border:1px solid #a0a0a0;"></div>
<div class="r" style="left:655px;top:835px;width:203px;height:21px;background:#ffffff;box-sizing:border-box;border:1px solid #a0a0a0;"></div>
<div class="r" style="left:841px;top:837px;width:15px;height:17px;background:#dcdcdc;"></div>
<svg class="r" style="left:845.5px;top:843.5px" width="6" height="4" viewBox="0 0 6 4"><path d="M0 0.5 H6 L3 3.5 Z" fill="#222"/></svg>
<div class="r" style="left:881px;top:181px;width:482px;height:17px;background:#f0f0f0;box-sizing:border-box;border:1px solid #a0a0a0;border-right-color:#fff;border-bottom-color:#fff;"></div>
<div class="t" style="left:1080.50px;top:184.54px;font-size:12.00px;line-height:12.00px;color:#111;transform:scaleX(1.0330);">Emplacements</div>
<div class="r" style="left:881px;top:210px;width:482px;height:664px;background:#ffffff;box-sizing:border-box;border:1px solid #646464;"></div>
<svg class="r" style="left:893px;top:219px" width="1" height="112" viewBox="0 0 1 112"><path d="M0.5 0 V112" stroke="#808080" stroke-width="1" stroke-dasharray="1 1"/></svg>
<svg class="r" style="left:895px;top:219px" width="9" height="1" viewBox="0 0 9 1"><path d="M0 0.5 H9" stroke="#808080" stroke-width="1" stroke-dasharray="1 1"/></svg>
<svg class="r" style="left:904px;top:212px" width="16" height="14" viewBox="0 0 16 14"><rect x="0.5" y="0.5" width="15" height="12.5" fill="#f4f4f4" stroke="#8a8a8a" stroke-width="1"/><rect x="1" y="1" width="14" height="1.8" fill="#9aa3c8"/><rect x="3.5" y="3.5" width="3" height="2" fill="#3a8ee0"/><rect x="9.5" y="3.5" width="3" height="2" fill="#2a9a3a"/><path d="M3.5 6.8 H6.5 M9.5 6.8 H12.5" stroke="#b0a0c0" stroke-width="0.8"/><rect x="3.5" y="8" width="3" height="2" fill="#f39c12"/><rect x="9.5" y="8" width="3" height="2" fill="#4a5ad0"/><path d="M2 13.2 H6 M9 13.2 H13" stroke="#8a8a8a" stroke-width="1"/></svg>
<div class="t" style="left:925.20px;top:213.96px;font-size:11.50px;line-height:11.50px;color:#000;transform:scaleX(0.9247);">ESAT_G_CORRE</div>
<svg class="r" style="left:895px;top:235px" width="9" height="1" viewBox="0 0 9 1"><path d="M0 0.5 H9" stroke="#808080" stroke-width="1" stroke-dasharray="1 1"/></svg>
<svg class="r" style="left:904px;top:228px" width="16" height="14" viewBox="0 0 16 14"><rect x="0.5" y="0.5" width="15" height="12.5" fill="#f4f4f4" stroke="#8a8a8a" stroke-width="1"/><rect x="1" y="1" width="14" height="1.8" fill="#9aa3c8"/><rect x="3.5" y="3.5" width="3" height="2" fill="#3a8ee0"/><rect x="9.5" y="3.5" width="3" height="2" fill="#2a9a3a"/><path d="M3.5 6.8 H6.5 M9.5 6.8 H12.5" stroke="#b0a0c0" stroke-width="0.8"/><rect x="3.5" y="8" width="3" height="2" fill="#f39c12"/><rect x="9.5" y="8" width="3" height="2" fill="#4a5ad0"/><path d="M2 13.2 H6 M9 13.2 H13" stroke="#8a8a8a" stroke-width="1"/></svg>
<div class="t" style="left:925.20px;top:229.96px;font-size:11.50px;line-height:11.50px;color:#000;transform:scaleX(0.9310);">GRIP_INK</div>
<svg class="r" style="left:895px;top:251px" width="9" height="1" viewBox="0 0 9 1"><path d="M0 0.5 H9" stroke="#808080" stroke-width="1" stroke-dasharray="1 1"/></svg>
<svg class="r" style="left:904px;top:244px" width="16" height="14" viewBox="0 0 16 14"><rect x="0.5" y="0.5" width="15" height="12.5" fill="#f4f4f4" stroke="#8a8a8a" stroke-width="1"/><rect x="1" y="1" width="14" height="1.8" fill="#9aa3c8"/><rect x="3.5" y="3.5" width="3" height="2" fill="#3a8ee0"/><rect x="9.5" y="3.5" width="3" height="2" fill="#2a9a3a"/><path d="M3.5 6.8 H6.5 M9.5 6.8 H12.5" stroke="#b0a0c0" stroke-width="0.8"/><rect x="3.5" y="8" width="3" height="2" fill="#f39c12"/><rect x="9.5" y="8" width="3" height="2" fill="#4a5ad0"/><path d="M2 13.2 H6 M9 13.2 H13" stroke="#8a8a8a" stroke-width="1"/></svg>
<div class="t" style="left:925.20px;top:245.96px;font-size:11.50px;line-height:11.50px;color:#000;transform:scaleX(0.9158);">MAGNY</div>
<svg class="r" style="left:895px;top:267px" width="9" height="1" viewBox="0 0 9 1"><path d="M0 0.5 H9" stroke="#808080" stroke-width="1" stroke-dasharray="1 1"/></svg>
<svg class="r" style="left:904px;top:260px" width="16" height="14" viewBox="0 0 16 14"><rect x="0.5" y="0.5" width="15" height="12.5" fill="#f4f4f4" stroke="#8a8a8a" stroke-width="1"/><rect x="1" y="1" width="14" height="1.8" fill="#9aa3c8"/><rect x="3.5" y="3.5" width="3" height="2" fill="#3a8ee0"/><rect x="9.5" y="3.5" width="3" height="2" fill="#2a9a3a"/><path d="M3.5 6.8 H6.5 M9.5 6.8 H12.5" stroke="#b0a0c0" stroke-width="0.8"/><rect x="3.5" y="8" width="3" height="2" fill="#f39c12"/><rect x="9.5" y="8" width="3" height="2" fill="#4a5ad0"/><path d="M2 13.2 H6 M9 13.2 H13" stroke="#8a8a8a" stroke-width="1"/></svg>
<div class="t" style="left:925.20px;top:261.96px;font-size:11.50px;line-height:11.50px;color:#000;transform:scaleX(0.9110);">PLEXITECH</div>
<svg class="r" style="left:889px;top:279px" width="9" height="9" viewBox="0 0 9 9"><rect x="0.5" y="0.5" width="8" height="8" fill="#fff" stroke="#8c8c8c" stroke-width="1"/><path d="M2 4.5 H7" stroke="#1c3c8c" stroke-width="1.2"/><path d="M4.5 2 V7" stroke="#1c3c8c" stroke-width="1.2"/></svg>
<svg class="r" style="left:898px;top:283px" width="6" height="1" viewBox="0 0 6 1"><path d="M0 0.5 H6" stroke="#808080" stroke-width="1" stroke-dasharray="1 1"/></svg>
<svg class="r" style="left:904px;top:276px" width="16" height="14" viewBox="0 0 16 14"><rect x="0.5" y="0.5" width="15" height="12.5" fill="#f4f4f4" stroke="#8a8a8a" stroke-width="1"/><rect x="1" y="1" width="14" height="1.8" fill="#9aa3c8"/><rect x="3.5" y="3.5" width="3" height="2" fill="#3a8ee0"/><rect x="9.5" y="3.5" width="3" height="2" fill="#2a9a3a"/><path d="M3.5 6.8 H6.5 M9.5 6.8 H12.5" stroke="#b0a0c0" stroke-width="0.8"/><rect x="3.5" y="8" width="3" height="2" fill="#f39c12"/><rect x="9.5" y="8" width="3" height="2" fill="#4a5ad0"/><path d="M2 13.2 H6 M9 13.2 H13" stroke="#8a8a8a" stroke-width="1"/></svg>
<div class="t" style="left:925.20px;top:277.96px;font-size:11.50px;line-height:11.50px;color:#000;transform:scaleX(0.9491);">PRESTATION_ACHAT</div>
<svg class="r" style="left:895px;top:299px" width="9" height="1" viewBox="0 0 9 1"><path d="M0 0.5 H9" stroke="#808080" stroke-width="1" stroke-dasharray="1 1"/></svg>
<svg class="r" style="left:904px;top:292px" width="16" height="14" viewBox="0 0 16 14"><rect x="0.5" y="0.5" width="15" height="12.5" fill="#f4f4f4" stroke="#8a8a8a" stroke-width="1"/><rect x="1" y="1" width="14" height="1.8" fill="#9aa3c8"/><rect x="3.5" y="3.5" width="3" height="2" fill="#3a8ee0"/><rect x="9.5" y="3.5" width="3" height="2" fill="#2a9a3a"/><path d="M3.5 6.8 H6.5 M9.5 6.8 H12.5" stroke="#b0a0c0" stroke-width="0.8"/><rect x="3.5" y="8" width="3" height="2" fill="#f39c12"/><rect x="9.5" y="8" width="3" height="2" fill="#4a5ad0"/><path d="M2 13.2 H6 M9 13.2 H13" stroke="#8a8a8a" stroke-width="1"/></svg>
<div class="t" style="left:925.20px;top:293.96px;font-size:11.50px;line-height:11.50px;color:#000;transform:scaleX(0.9460);">RHW</div>
<svg class="r" style="left:889px;top:311px" width="9" height="9" viewBox="0 0 9 9"><rect x="0.5" y="0.5" width="8" height="8" fill="#fff" stroke="#8c8c8c" stroke-width="1"/><path d="M2 4.5 H7" stroke="#1c3c8c" stroke-width="1.2"/><path d="M4.5 2 V7" stroke="#1c3c8c" stroke-width="1.2"/></svg>
<svg class="r" style="left:898px;top:315px" width="6" height="1" viewBox="0 0 6 1"><path d="M0 0.5 H6" stroke="#808080" stroke-width="1" stroke-dasharray="1 1"/></svg>
<svg class="r" style="left:904px;top:308px" width="16" height="14" viewBox="0 0 16 14"><rect x="0.5" y="0.5" width="15" height="12.5" fill="#f4f4f4" stroke="#8a8a8a" stroke-width="1"/><rect x="1" y="1" width="14" height="1.8" fill="#9aa3c8"/><rect x="3.5" y="3.5" width="3" height="2" fill="#3a8ee0"/><rect x="9.5" y="3.5" width="3" height="2" fill="#2a9a3a"/><path d="M3.5 6.8 H6.5 M9.5 6.8 H12.5" stroke="#b0a0c0" stroke-width="0.8"/><rect x="3.5" y="8" width="3" height="2" fill="#f39c12"/><rect x="9.5" y="8" width="3" height="2" fill="#4a5ad0"/><path d="M2 13.2 H6 M9 13.2 H13" stroke="#8a8a8a" stroke-width="1"/></svg>
<div class="t" style="left:925.20px;top:309.96px;font-size:11.50px;line-height:11.50px;color:#000;transform:scaleX(0.9393);">ST-BARTH</div>
<svg class="r" style="left:889px;top:327px" width="9" height="9" viewBox="0 0 9 9"><rect x="0.5" y="0.5" width="8" height="8" fill="#fff" stroke="#8c8c8c" stroke-width="1"/><path d="M2 4.5 H7" stroke="#1c3c8c" stroke-width="1.2"/><path d="M4.5 2 V7" stroke="#1c3c8c" stroke-width="1.2"/></svg>
<svg class="r" style="left:898px;top:331px" width="6" height="1" viewBox="0 0 6 1"><path d="M0 0.5 H6" stroke="#808080" stroke-width="1" stroke-dasharray="1 1"/></svg>
<svg class="r" style="left:904px;top:324px" width="16" height="14" viewBox="0 0 16 14"><rect x="0.5" y="0.5" width="15" height="12.5" fill="#f4f4f4" stroke="#8a8a8a" stroke-width="1"/><rect x="1" y="1" width="14" height="1.8" fill="#9aa3c8"/><rect x="3.5" y="3.5" width="3" height="2" fill="#3a8ee0"/><rect x="9.5" y="3.5" width="3" height="2" fill="#2a9a3a"/><path d="M3.5 6.8 H6.5 M9.5 6.8 H12.5" stroke="#b0a0c0" stroke-width="0.8"/><rect x="3.5" y="8" width="3" height="2" fill="#f39c12"/><rect x="9.5" y="8" width="3" height="2" fill="#4a5ad0"/><path d="M2 13.2 H6 M9 13.2 H13" stroke="#8a8a8a" stroke-width="1"/></svg>
<div class="t" style="left:925.20px;top:325.96px;font-size:11.50px;line-height:11.50px;color:#000;transform:scaleX(0.9133);">STOCK CONSOMMATION GESCO</div>
<div class="r" style="left:18px;top:880px;width:150px;height:30px;background:#f4f4f4;box-sizing:border-box;border:1px solid #c3c3c3;"></div>
<div class="r" style="left:19px;top:881px;width:148px;height:28px;box-sizing:border-box;border:1px solid #fafafa;"></div>
<div class="t" style="left:75.70px;top:888.94px;font-size:12.00px;line-height:12.00px;color:#333;transform:scaleX(0.9253);">Transférer</div>
<svg class="r" style="left:26px;top:889px" width="19" height="12" viewBox="0 0 19 12"><path d="M1 10.5 Q3 3.5 10.5 3.3 V0.8 L17.7 5.5 L10.5 10.2 V7.5 Q5 7.3 1 10.5 Z" fill="#2aa637"/></svg>
<div class="r" style="left:177px;top:880px;width:150px;height:30px;background:#f4f4f4;box-sizing:border-box;border:1px solid #c3c3c3;"></div>
<div class="r" style="left:178px;top:881px;width:148px;height:28px;box-sizing:border-box;border:1px solid #fafafa;"></div>
<div class="t" style="left:241.30px;top:888.94px;font-size:12.00px;line-height:12.00px;color:#333;transform:scaleX(0.9095);">Annuler</div>
<svg class="r" style="left:184px;top:886px" width="20" height="18" viewBox="0 0 20 18"><path d="M8.2 3.2 A6.2 6.2 0 1 1 5.7 13.7" fill="none" stroke="#e8141c" stroke-width="3"/><path d="M1.8 1.6 L1.8 9.2 L9 8.4 Z" fill="#e8141c"/></svg>
<div class="r" style="left:335px;top:880px;width:150px;height:30px;background:#f4f4f4;box-sizing:border-box;border:1px solid #c3c3c3;"></div>
<div class="r" style="left:336px;top:881px;width:148px;height:28px;box-sizing:border-box;border:1px solid #fafafa;"></div>
<div class="t" style="left:396.00px;top:888.94px;font-size:12.00px;line-height:12.00px;color:#333;transform:scaleX(0.9294);">Imprimer</div>
<svg class="r" style="left:343px;top:886px" width="19" height="17" viewBox="0 0 19 17"><rect x="4.5" y="1" width="9" height="5" fill="#fff" stroke="#111" stroke-width="1.8"/><rect x="1" y="6" width="17" height="7" rx="1.5" fill="#111"/><rect x="4.5" y="10" width="9" height="5.5" fill="#fff" stroke="#111" stroke-width="1.8"/></svg>
<div class="r" style="left:509px;top:880px;width:150px;height:30px;background:#f4f4f4;box-sizing:border-box;border:1px solid #c3c3c3;"></div>
<div class="r" style="left:510px;top:881px;width:148px;height:28px;box-sizing:border-box;border:1px solid #fafafa;"></div>
<div class="t" style="left:576.70px;top:888.94px;font-size:12.00px;line-height:12.00px;color:#333;transform:scaleX(0.9767);">Voir...</div>
<svg class="r" style="left:516px;top:887px" width="20" height="15" viewBox="0 0 20 15"><path d="M1.6 7.7 Q10 -2 18.4 7.7 Q10 17 1.6 7.7 Z" fill="#0d4f91"/><path d="M4.2 7.8 Q10 1.8 15.8 7.8 Q10 13.8 4.2 7.8 Z" fill="#fff"/><circle cx="10.1" cy="7.2" r="4" fill="#0d5595"/></svg>
<div class="r" style="left:666px;top:880px;width:164px;height:30px;background:#f4f4f4;box-sizing:border-box;border:1px solid #c3c3c3;"></div>
<div class="r" style="left:667px;top:881px;width:162px;height:28px;box-sizing:border-box;border:1px solid #fafafa;"></div>
<div class="t" style="left:717.80px;top:888.94px;font-size:12.00px;line-height:12.00px;color:#333;transform:scaleX(0.9337);">Chercher Place</div>
<svg class="r" style="left:674px;top:886px" width="19" height="18" viewBox="0 0 19 18"><circle cx="7.5" cy="7.5" r="5.3" fill="none" stroke="#a8151b" stroke-width="2.4"/><path d="M11.3 11.3 L16.5 16.5" stroke="#a8151b" stroke-width="3" stroke-linecap="round"/></svg>
<div class="r" style="left:1215px;top:880px;width:150px;height:30px;background:#f4f4f4;box-sizing:border-box;border:1px solid #c3c3c3;"></div>
<div class="r" style="left:1216px;top:881px;width:148px;height:28px;box-sizing:border-box;border:1px solid #fafafa;"></div>
<div class="t" style="left:1280.20px;top:888.94px;font-size:12.00px;line-height:12.00px;color:#333;transform:scaleX(0.9213);">Fermer</div>
<svg class="r" style="left:1223px;top:886px" width="18" height="18" viewBox="0 0 18 18"><path d="M2.5 2.5 L15.5 15.5 M15.5 2.5 L2.5 15.5" stroke="#e3141c" stroke-width="3.6" stroke-linecap="round"/></svg>
<div class="r" style="left:0px;top:0px;width:1384px;height:1px;background:#163a80;"></div>
<div class="r" style="left:0px;top:0px;width:1px;height:921px;background:#1a4690;"></div>
<div class="r" style="left:1px;top:172px;width:1px;height:747px;background:#3f4442;"></div>
<div class="r" style="left:2px;top:172px;width:1px;height:746px;background:#fcfcff;"></div>
<div class="r" style="left:1382px;top:0px;width:2px;height:921px;background:#1a4a9a;"></div>
<div class="r" style="left:1381px;top:172px;width:1px;height:747px;background:#303838;"></div>
<div class="r" style="left:1380px;top:172px;width:1px;height:746px;background:#ffffff;"></div>
<div class="r" style="left:1px;top:918px;width:1380px;height:1px;background:#ffffff;"></div>
<div class="r" style="left:1px;top:919px;width:1381px;height:1px;background:#2a2a2a;"></div>
<div class="r" style="left:0px;top:920px;width:1382px;height:1px;background:#474747;"></div>
</body></html>
